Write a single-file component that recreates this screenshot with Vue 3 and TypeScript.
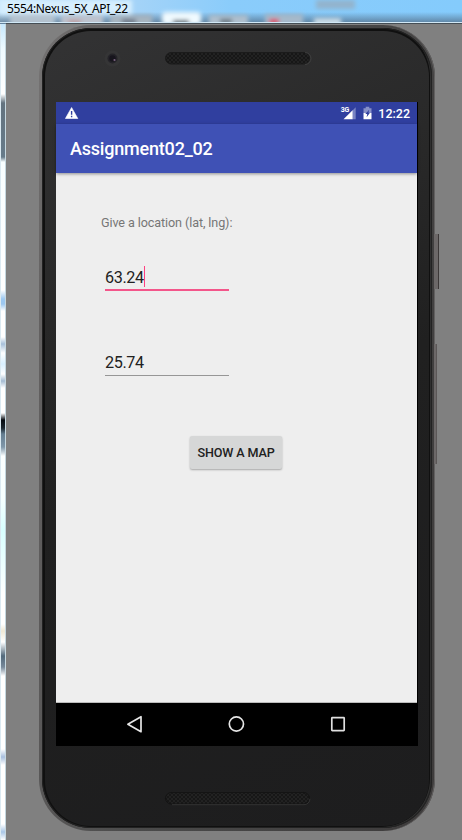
<script setup lang="ts">
import { ref } from 'vue'

const windowTitle = ref('5554:Nexus_5X_API_22')
const appTitle = ref('Assignment02_02')
const clock = ref('12:22')
const latitude = ref('63.24')
const longitude = ref('25.74')
</script>

<template>
  <div class="window">
    <header class="titlebar">
      <svg class="glass" width="462" height="24" viewBox="0 0 462 24" aria-hidden="true">
        <defs>
          <linearGradient id="sky" x1="0" y1="0" x2="1" y2="0">
            <stop offset="0" stop-color="#c6e6fb" />
            <stop offset="0.3" stop-color="#a3d3f8" />
            <stop offset="0.5" stop-color="#8accfb" />
            <stop offset="1" stop-color="#84cbfc" />
          </linearGradient>
          <linearGradient id="shade" x1="0" y1="0" x2="0" y2="1">
            <stop offset="0.5" stop-color="#56738e" stop-opacity="0" />
            <stop offset="1" stop-color="#56738e" stop-opacity="0.9" />
          </linearGradient>
          <filter id="soft" x="-20%" y="-60%" width="140%" height="220%">
            <feGaussianBlur stdDeviation="2.2" />
          </filter>
        </defs>
        <rect width="462" height="24" fill="url(#sky)" />
        <rect width="462" height="24" fill="url(#shade)" />
        <g filter="url(#soft)">
          <rect x="10" y="14" width="45" height="12" fill="#b3c2cf" />
          <rect x="61" y="15" width="42" height="12" fill="#bdc3ce" />
          <rect x="110" y="15" width="42" height="12" fill="#a6b4c0" />
          <rect x="162" y="12" width="39" height="13" rx="4" fill="#f0faff" />
          <rect x="209" y="15" width="39" height="12" fill="#aebfcd" />
          <rect x="265" y="14" width="38" height="12" fill="#a6b9ca" />
          <rect x="314" y="18" width="27" height="8" fill="#cadbe6" />
          <rect x="316" y="0" width="39" height="9" fill="#93b4cd" />
          <rect x="68" y="20" width="13" height="5" fill="#bd9a9d" />
          <rect x="122" y="19" width="14" height="6" fill="#6d7888" />
          <rect x="173" y="20" width="16" height="5" fill="#535d68" />
          <rect x="220" y="19" width="12" height="5" fill="#62717c" />
          <rect x="269" y="19" width="10" height="5" fill="#df3554" />
          <rect x="0" y="0" width="132" height="14" fill="#d7effe" />
        </g>
        <rect y="22" width="462" height="1" fill="#d1e8f6" />
        <rect x="6" y="23" width="456" height="1" fill="#454e55" />
      </svg>
      <span class="window-title">{{ windowTitle }}</span>
    </header>

    <div class="workspace">
      <div class="edge"></div>
      <main class="client">
        <section class="device">
          <i class="side-button power"></i>
          <i class="side-button volume"></i>
          <div class="rim">
            <div class="face">
              <div class="bezel top">
                <svg width="384" height="72" viewBox="0 0 384 72" aria-hidden="true">
                  <defs>
                    <pattern id="holes" width="4" height="4" patternUnits="userSpaceOnUse">
                      <rect width="4" height="4" fill="#222" />
                      <circle cx="1" cy="1" r=".75" fill="#060606" />
                      <circle cx="3" cy="3" r=".75" fill="#060606" />
                    </pattern>
                  </defs>
                  <circle cx="67.5" cy="27.5" r="8" fill="#353536" />
                  <circle cx="67.5" cy="27.5" r="5" fill="#242328" />
                  <circle cx="67.5" cy="27.5" r="3.2" fill="#17151d" />
                  <circle cx="69.5" cy="29" r="1.1" fill="#7b6380" />
                  <rect x="120.5" y="21.5" width="144" height="11.5" rx="5.75" fill="url(#holes)" stroke="#1b1b1b" />
                  <path d="M260 21.5a6 6 0 0 1 0 12" fill="none" stroke="#484848" stroke-width=".7" />
                </svg>
              </div>

              <div class="screen">
                <div class="statusbar">
                  <svg class="warning" width="14" height="13" viewBox="0 0 14 13" aria-hidden="true">
                    <path d="M6.6.5 12.8 11.5H.4z" fill="#fff" stroke="#fff" stroke-width=".6" stroke-linejoin="round" />
                    <path d="M6.6 4v3.8M6.6 8.8v1.5" stroke="#303f9f" stroke-width="1.4" />
                  </svg>
                  <div class="indicators">
                    <span class="network">3G</span>
                    <svg class="signal" width="13" height="13" viewBox="0 0 13 13" aria-hidden="true">
                      <path d="M12.7.2v12H9.5V3.4z" fill="#7984c3" />
                      <path d="M9.6 3.2v9H.5z" fill="#fff" />
                    </svg>
                    <svg class="battery" width="9" height="14" viewBox="0 0 9 14" aria-hidden="true">
                      <path d="M2.7.7h3.6v1.5h2.2V7H.5V2.2h2.2z" fill="#8790c8" />
                      <path d="M.5 7h8v6.2h-8z" fill="#fff" />
                      <path d="M6.2 3.8 2.3 7.9h1.9l-.6 3.3 3.4-4.5H5.4z" fill="#303f9f" />
                    </svg>
                    <span class="clock">{{ clock }}</span>
                  </div>
                </div>
                <div class="appbar">{{ appTitle }}</div>
                <div class="content">
                  <div class="prompt">Give a location (lat, lng):</div>
                  <div class="field focused"><span>{{ latitude }}</span><i class="caret"></i></div>
                  <div class="field"><span>{{ longitude }}</span></div>
                  <button class="show" type="button">SHOW A MAP</button>
                </div>
                <nav class="navbar">
                  <svg width="18" height="20" viewBox="0 0 18 20" aria-label="Back">
                    <path d="M15 2.7v15L1.9 10.2z" fill="none" stroke="#e6e6e6" stroke-width="1.7" stroke-linejoin="round" />
                  </svg>
                  <svg width="18" height="20" viewBox="0 0 18 20" aria-label="Home">
                    <circle cx="8.4" cy="10" r="7.1" fill="none" stroke="#e6e6e6" stroke-width="1.7" />
                  </svg>
                  <svg width="18" height="20" viewBox="0 0 18 20" aria-label="Recents">
                    <rect x="2.8" y="3.7" width="12.4" height="12.9" rx=".5" fill="none" stroke="#e0e0e0" stroke-width="1.7" />
                  </svg>
                </nav>
              </div>

              <div class="bezel bottom">
                <svg width="384" height="80" viewBox="0 0 384 80" aria-hidden="true">
                  <rect x="120.5" y="46.5" width="144" height="11.5" rx="5.75" fill="url(#holes)" stroke="#141414" />
                  <path d="M127 58.7h132a6 6 0 0 0 6-6" fill="none" stroke="#3a3a3a" stroke-width=".8" />
                </svg>
              </div>
            </div>
          </div>
        </section>
      </main>
    </div>
  </div>
</template>

<style>
body {
  overflow: hidden;
}
</style>

<style scoped>
* {
  box-sizing: border-box;
}

.window {
  width: 462px;
  height: 840px;
  overflow: hidden;
  font-family: Roboto, "Liberation Sans", sans-serif;
}

.titlebar {
  display: grid;
  height: 24px;
}

.glass,
.window-title {
  grid-area: 1 / 1;
}

.window-title {
  z-index: 1;
  padding-left: 7px;
  font: 12px/17px "Noto Sans", sans-serif;
  letter-spacing: -0.38px;
  color: #000;
}

.workspace {
  display: flex;
  height: 816px;
}

.edge {
  width: 6px;
  border-left: 1px solid #dbeaf2;
  border-right: 1px solid #c5d7df;
  background: linear-gradient(
    to bottom,
    #c6e8fd 0,
    #effaff 25px,
    #fff 70px,
    #63737f 79px,
    #667b8a 133px,
    #f8feff 138px,
    #fff 266px,
    #9cc8f1 275px,
    #9cc8f1 280px,
    #fff 287px,
    #fff 313px,
    #a7c0da 320px,
    #fff 329px,
    #d8f0ff 340px,
    #fff 350px,
    #a5bcd3 357px,
    #fff 364px,
    #fff 389px,
    #050a10 396px,
    #1b2730 404px,
    #647d90 410px,
    #8097a9 423px,
    #fcffff 432px,
    #f6ffff 475px,
    #d8ffff 506px,
    #fff 570px,
    #fff 600px,
    #eee8d5 607px,
    #fff 618px,
    #52697b 632px,
    #77899a 643px,
    #fff 652px,
    #fff 725px,
    #a8bfde 733px,
    #fff 741px,
    #fff 800px,
    #a9c7e7 808px,
    #fff 816px
  );
}

.client {
  flex: 1;
  padding: 1px 0 0 33px;
  background: #808080;
}

.device {
  position: relative;
  width: 396px;
  height: 806px;
  padding: 3px;
  border-radius: 52px;
  background: linear-gradient(100deg, #767474 0, #636161 10%, #4a4a4a 45%, #3d3b3b 100%);
  box-shadow: inset -1px 0 0 #626060;
}

.rim {
  width: 390px;
  height: 800px;
  padding: 3px 3px 2px;
  border-radius: 49px;
  background: #101010;
  box-shadow: inset 0 0 0 1px #222, inset -2px -1px 0 #303030;
}

.face {
  width: 384px;
  height: 795px;
  border-radius: 46px;
  overflow: hidden;
  background: linear-gradient(155deg, #333334 0, #292929 28%, #202020 50%, #1d1d1e 100%);
}

.bezel svg {
  display: block;
}

.bezel.top {
  height: 71px;
}

.bezel.bottom {
  height: 80px;
}

.screen {
  display: flex;
  flex-direction: column;
  width: 362px;
  height: 644px;
  margin-left: 11px;
  border-right: 1px solid #000;
  background: #eee;
}

.statusbar {
  display: flex;
  justify-content: space-between;
  height: 22px;
  padding: 5px 7px 0 9px;
  background: #303f9f;
  color: #fff;
}

.indicators {
  display: flex;
  align-items: flex-start;
}

.network {
  margin-right: -5.5px;
  font-size: 7px;
  line-height: 7px;
  font-weight: 700;
  letter-spacing: -0.4px;
}

.battery {
  margin: -1px 6px 0 7px;
}

.clock {
  font-size: 12.5px;
  line-height: 13px;
  font-weight: 500;
}

.appbar {
  z-index: 1;
  height: 49px;
  padding-left: 14px;
  background: #3f51b5;
  box-shadow: 0 1px 3px rgba(0, 0, 0, 0.4);
  color: #fff;
  font-size: 18px;
  line-height: 50px;
  font-weight: 500;
  letter-spacing: -0.2px;
}

.content {
  display: flex;
  flex-direction: column;
  height: 530px;
  padding: 41px 0 0 45px;
  border-bottom: 1px solid #bbb;
}

.prompt {
  height: 18px;
  color: #767676;
  font-size: 12.6px;
  line-height: 18px;
  letter-spacing: -0.1px;
}

.field {
  display: flex;
  width: 124px;
  height: 27px;
  margin: 58px 0 0 4px;
  border-bottom: 1px solid #969696;
  color: #212121;
  font-size: 16.2px;
  line-height: 28px;
  letter-spacing: -0.4px;
}

.field.focused {
  height: 27px;
  margin-top: 32px;
  border-bottom: 2px solid #f3568a;
  line-height: 27px;
}

.caret {
  width: 1.5px;
  height: 21px;
  margin-top: 2px;
  background: #ff4081;
}

.show {
  width: 92px;
  height: 33px;
  margin: 60px 0 0 89px;
  padding: 0;
  border: 0;
  border-radius: 2px;
  background: #d6d7d7;
  box-shadow: 0 1px 2px rgba(0, 0, 0, 0.3);
  color: #212121;
  font: 500 12.6px/32px Roboto, sans-serif;
  letter-spacing: -0.12px;
}

.navbar {
  display: flex;
  justify-content: space-between;
  align-items: flex-start;
  height: 43px;
  padding: 11px 70px 0;
  background: #000;
}

.side-button {
  position: absolute;
  left: 395px;
  background: #6c6868;
}

.power {
  top: 209px;
  width: 5px;
  height: 55px;
  border-right: 1px solid #3c3838;
}

.volume {
  top: 319px;
  width: 3px;
  height: 120px;
  border-right: 1px solid #5b5757;
}
</style>
